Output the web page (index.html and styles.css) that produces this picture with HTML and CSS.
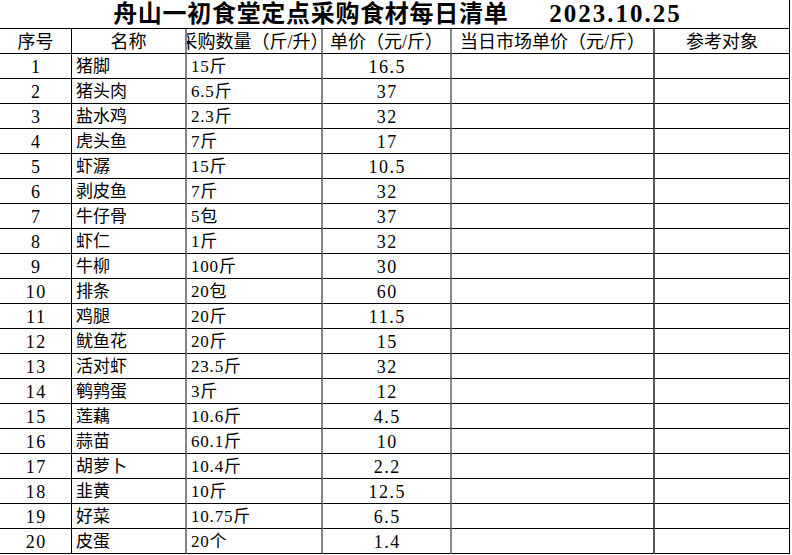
FILE: index.html
```html
<!DOCTYPE html>
<html lang="zh-CN">
<head>
<meta charset="utf-8">
<title>舟山一初食堂定点采购食材每日清单</title>
<link rel="stylesheet" href="styles.css">
</head>
<body>
<div class="sheet">
  <div class="title"><span class="title-main">舟山一初食堂定点采购食材每日清单</span><span class="title-date">2023.10.25</span></div>
  <div class="grid">
    <div class="c c1 h">序号</div><div class="c c2 h">名称</div><div class="c c3 h">采购数量（斤/升）</div><div class="c c4 h">单价（元/斤）</div><div class="c c5 h">当日市场单价（元/斤）</div><div class="c c6 h">参考对象</div>

    <div class="c c1 n">1</div><div class="c c2 l">猪脚</div><div class="c c3 l">15斤</div><div class="c c4 n">16.5</div><div class="c c5"></div><div class="c c6"></div>
    <div class="c c1 n">2</div><div class="c c2 l">猪头肉</div><div class="c c3 l">6.5斤</div><div class="c c4 n">37</div><div class="c c5"></div><div class="c c6"></div>
    <div class="c c1 n">3</div><div class="c c2 l">盐水鸡</div><div class="c c3 l">2.3斤</div><div class="c c4 n">32</div><div class="c c5"></div><div class="c c6"></div>
    <div class="c c1 n">4</div><div class="c c2 l">虎头鱼</div><div class="c c3 l">7斤</div><div class="c c4 n">17</div><div class="c c5"></div><div class="c c6"></div>
    <div class="c c1 n">5</div><div class="c c2 l">虾潺</div><div class="c c3 l">15斤</div><div class="c c4 n">10.5</div><div class="c c5"></div><div class="c c6"></div>
    <div class="c c1 n">6</div><div class="c c2 l">剥皮鱼</div><div class="c c3 l">7斤</div><div class="c c4 n">32</div><div class="c c5"></div><div class="c c6"></div>
    <div class="c c1 n">7</div><div class="c c2 l">牛仔骨</div><div class="c c3 l">5包</div><div class="c c4 n">37</div><div class="c c5"></div><div class="c c6"></div>
    <div class="c c1 n">8</div><div class="c c2 l">虾仁</div><div class="c c3 l">1斤</div><div class="c c4 n">32</div><div class="c c5"></div><div class="c c6"></div>
    <div class="c c1 n">9</div><div class="c c2 l">牛柳</div><div class="c c3 l">100斤</div><div class="c c4 n">30</div><div class="c c5"></div><div class="c c6"></div>
    <div class="c c1 n">10</div><div class="c c2 l">排条</div><div class="c c3 l">20包</div><div class="c c4 n">60</div><div class="c c5"></div><div class="c c6"></div>
    <div class="c c1 n">11</div><div class="c c2 l">鸡腿</div><div class="c c3 l">20斤</div><div class="c c4 n">11.5</div><div class="c c5"></div><div class="c c6"></div>
    <div class="c c1 n">12</div><div class="c c2 l">鱿鱼花</div><div class="c c3 l">20斤</div><div class="c c4 n">15</div><div class="c c5"></div><div class="c c6"></div>
    <div class="c c1 n">13</div><div class="c c2 l">活对虾</div><div class="c c3 l">23.5斤</div><div class="c c4 n">32</div><div class="c c5"></div><div class="c c6"></div>
    <div class="c c1 n">14</div><div class="c c2 l">鹌鹑蛋</div><div class="c c3 l">3斤</div><div class="c c4 n">12</div><div class="c c5"></div><div class="c c6"></div>
    <div class="c c1 n">15</div><div class="c c2 l">莲藕</div><div class="c c3 l">10.6斤</div><div class="c c4 n">4.5</div><div class="c c5"></div><div class="c c6"></div>
    <div class="c c1 n">16</div><div class="c c2 l">蒜苗</div><div class="c c3 l">60.1斤</div><div class="c c4 n">10</div><div class="c c5"></div><div class="c c6"></div>
    <div class="c c1 n">17</div><div class="c c2 l">胡萝卜</div><div class="c c3 l">10.4斤</div><div class="c c4 n">2.2</div><div class="c c5"></div><div class="c c6"></div>
    <div class="c c1 n">18</div><div class="c c2 l">韭黄</div><div class="c c3 l">10斤</div><div class="c c4 n">12.5</div><div class="c c5"></div><div class="c c6"></div>
    <div class="c c1 n">19</div><div class="c c2 l">好菜</div><div class="c c3 l">10.75斤</div><div class="c c4 n">6.5</div><div class="c c5"></div><div class="c c6"></div>
    <div class="c c1 n">20</div><div class="c c2 l">皮蛋</div><div class="c c3 l">20个</div><div class="c c4 n">1.4</div><div class="c c5"></div><div class="c c6"></div>
  </div>
</div>
</body>
</html>
```
FILE: styles.css
```css
html, body {
  margin: 0;
  padding: 0;
  background: #fff;
}
body {
  font-family: "Liberation Serif", "Noto Sans CJK SC", serif;
  color: #000;
}
.sheet {
  width: 790px;
}
.title {
  height: 28px;
  box-sizing: border-box;
  border-right: 1px solid #000;
  display: flex;
  justify-content: center;
  align-items: center;
  gap: 41px;
  font-weight: bold;
  font-size: 24px;
  line-height: 28px;
  padding-left: 6px;
}
.title-main {
  letter-spacing: 0.7px;
}
.title-date {
  font-size: 25px;
  letter-spacing: 2px;
}
.grid {
  display: grid;
  grid-template-columns: 72px 115px 136px 129px 203px 135px;
  grid-auto-rows: 25px;
  border-top: 1px solid #000;
}
.c {
  box-sizing: border-box;
  border-bottom: 1px solid #000;
  display: flex;
  align-items: center;
  justify-content: center;
  overflow: hidden;
  white-space: nowrap;
  font-size: 17px;
  line-height: 24px;
  padding-top: 1px;
}
.c1 { border-right: 1px solid #000; }
.c2 { border-right: 2px solid #858585; }
.c3 { border-right: 2px solid #858585; }
.c4 { border-right: 2px solid #8a8a8a; }
.c5 { border-right: 2px solid #5a5a5a; }
.c6 { border-right: 1px solid #000; }
.h {
  font-size: 18px;
}
.l {
  justify-content: flex-start;
  padding-left: 4px;
}
.n {
  font-size: 18px;
  letter-spacing: 1.5px;
  padding-left: 1.5px;
}
.c3.l {
  letter-spacing: 0.8px;
}
```
